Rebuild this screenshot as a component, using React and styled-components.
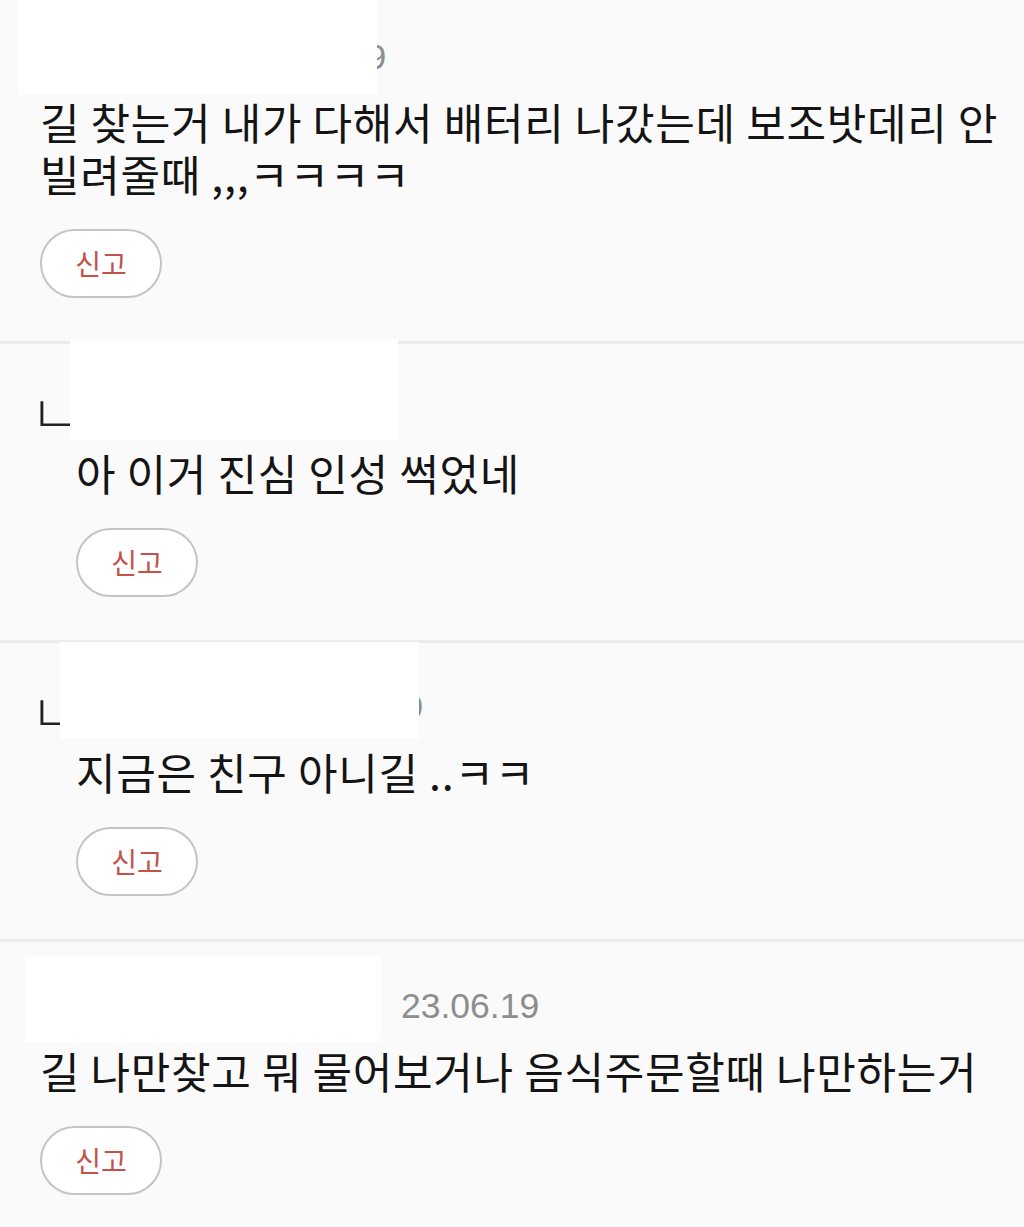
import React from "react";
import styled, { createGlobalStyle } from "styled-components";

const GlobalStyle = createGlobalStyle`
  html, body {
    margin: 0;
    padding: 0;
    background: #fafafa;
    overflow: hidden;
  }
  body {
    font-family: "Noto Sans CJK KR", "Noto Sans", sans-serif;
    color: #111;
  }
`;

const List = styled.div`
  display: flex;
  flex-direction: column;
  margin-top: -7px;
  width: 1024px;
`;

const Comment = styled.section`
  position: relative;
  display: flex;
  flex-direction: column;
  padding-bottom: 43px;
  border-bottom: 3px solid #ebebeb;
  &:last-child {
    border-bottom: none;
  }
`;

const Header = styled.div`
  display: flex;
  align-items: center;
  height: 48px;
  padding: 40px 0 14px ${(p) => (p.$reply ? 30 : 40)}px;
`;

const Marker = styled.span`
  display: inline-block;
  font-family: "Noto Sans CJK KR", sans-serif;
  font-size: 54px;
  font-weight: 300;
  line-height: 48px;
  width: 54px;
  color: #222;
  transform: translateY(3px);
`;

const Name = styled.span`
  display: inline-block;
  width: ${(p) => p.$w}px;
  font-size: 32px;
  line-height: 48px;
  color: #333;
`;

const DateText = styled.span`
  font-family: "Liberation Sans", Arial, sans-serif;
  font-size: 35.5px;
  line-height: 48px;
  color: #8d8d8d;
`;

const Body = styled.p`
  margin: 0;
  padding-left: ${(p) => (p.$reply ? 76 : 40)}px;
  font-size: 43px;
  letter-spacing: 0.7px;
  line-height: 52px;
  color: #141414;
  white-space: nowrap;
`;

const ReportButton = styled.button`
  margin: 30px 0 0 ${(p) => (p.$reply ? 76 : 40)}px;
  width: 122px;
  height: 69px;
  box-sizing: border-box;
  border: 2.5px solid #c4c4c4;
  border-radius: 35px;
  background: #fff;
  color: #c2524a;
  font-family: "Noto Sans CJK KR", sans-serif;
  font-size: 28px;
  line-height: 1;
  padding: 0 0 2px;
  display: flex;
  align-items: center;
  justify-content: center;
`;

const Redaction = styled.div`
  position: absolute;
  background: #ffffff;
  left: ${(p) => p.$left}px;
  top: ${(p) => p.$top}px;
  width: ${(p) => p.$width}px;
  height: ${(p) => p.$height}px;
`;

const comments = [
  {
    reply: false,
    name: "익명",
    nameW: 208,
    date: "23.06.19",
    lines: ["길 찾는거 내가 다해서 배터리 나갔는데 보조밧데리 안", "빌려줄때 ,,,ㅋㅋㅋㅋ"],
    box: { left: 18, top: 0, width: 359, height: 102 },
  },
  {
    reply: true,
    name: "익명",
    nameW: 150,
    date: "23.06.19",
    lines: ["아 이거 진심 인성 썩었네"],
    box: { left: 70, top: -5, width: 328, height: 101 },
  },
  {
    reply: true,
    name: "익명",
    nameW: 201,
    date: "23.06.19",
    lines: ["지금은 친구 아니길 ..ㅋㅋ"],
    box: { left: 60, top: -1, width: 359, height: 97 },
  },
  {
    reply: false,
    name: "익명",
    nameW: 361,
    date: "23.06.19",
    lines: ["길 나만찾고 뭐 물어보거나 음식주문할때 나만하는거"],
    box: { left: 25, top: 14, width: 356, height: 86 },
  },
];

export default function App() {
  return (
    <>
      <GlobalStyle />
      <List>
        {comments.map((c, i) => (
          <Comment key={i}>
            <Header $reply={c.reply}>
              {c.reply && <Marker>ㄴ</Marker>}
              <Name $w={c.nameW}>{c.name}</Name>
              <DateText>{c.date}</DateText>
            </Header>
            <Body $reply={c.reply}>
              {c.lines.map((l, j) => (
                <React.Fragment key={j}>
                  {j > 0 && <br />}
                  {l}
                </React.Fragment>
              ))}
            </Body>
            <ReportButton $reply={c.reply}>신고</ReportButton>
            <Redaction
              $left={c.box.left}
              $top={c.box.top}
              $width={c.box.width}
              $height={c.box.height}
            />
          </Comment>
        ))}
      </List>
    </>
  );
}
